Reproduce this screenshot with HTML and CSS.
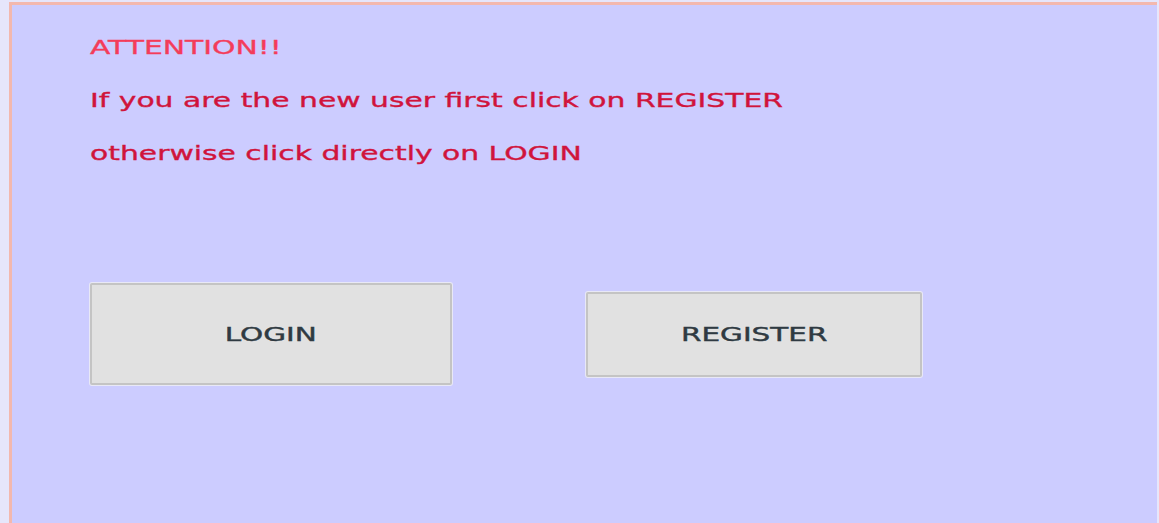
FILE: index.html
```html
<!DOCTYPE html>
<html>
<head>
<meta charset="utf-8">
<link rel="stylesheet" href="styles.css">
</head>
<body>
<div class="frame">
  <div class="panel">
    <div class="messages">
      <p class="msg attention"><span class="wide">ATTENTION!!</span></p>
      <p class="msg"><span class="wide">If you are the new user first click on REGISTER</span></p>
      <p class="msg"><span class="wide">otherwise click directly on LOGIN</span></p>
    </div>
    <div class="actions">
      <button class="btn btn-login"><span class="btn-label">LOGIN</span></button>
      <button class="btn btn-register"><span class="btn-label">REGISTER</span></button>
    </div>
  </div>
</div>
</body>
</html>
```

FILE: styles.css
```css
html, body {
  margin: 0;
  padding: 0;
  height: 100%;
  overflow: hidden;
}
body {
  background: #e6e6fb;
  font-family: "DejaVu Sans", Verdana, sans-serif;
}
.frame {
  padding: 2px 2px 0 9px;
  height: 100%;
  box-sizing: border-box;
}
.panel {
  background: #ccccff;
  border-top: 3px solid #f3b8ae;
  border-left: 3px solid #f3b8ae;
  height: 100%;
  box-sizing: border-box;
  padding: 29px 0 0 78px;
}
.messages {
  display: flex;
  flex-direction: column;
}
.msg {
  margin: 0;
  font-size: 20px;
  line-height: 53px;
  color: #d0143c;
  white-space: nowrap;
  -webkit-text-stroke: 0.35px currentColor;
}
.wide {
  display: inline-block;
  transform: scaleX(1.49);
  transform-origin: left center;
}
.attention {
  color: #f43c5a;
  line-height: 26px;
  margin-bottom: 14px;
}
.actions {
  display: flex;
  align-items: center;
  margin-top: 103px;
}
.btn {
  font-family: "DejaVu Sans", Verdana, sans-serif;
  font-size: 19px;
  color: #2f3a42;
  background: #e1e1e1;
  border: 2px solid #c4c4c4;
  box-shadow: 0 0 0 1px #e8e8f6;
  border-radius: 2px;
  padding: 0;
  -webkit-text-stroke: 0.4px currentColor;
}
.btn-label {
  display: inline-block;
  transform: scaleX(1.55);
  transform-origin: center;
}
.btn-login {
  width: 362px;
  height: 102px;
}
.btn-register {
  width: 336px;
  height: 85px;
  margin-left: 134px;
}
```
